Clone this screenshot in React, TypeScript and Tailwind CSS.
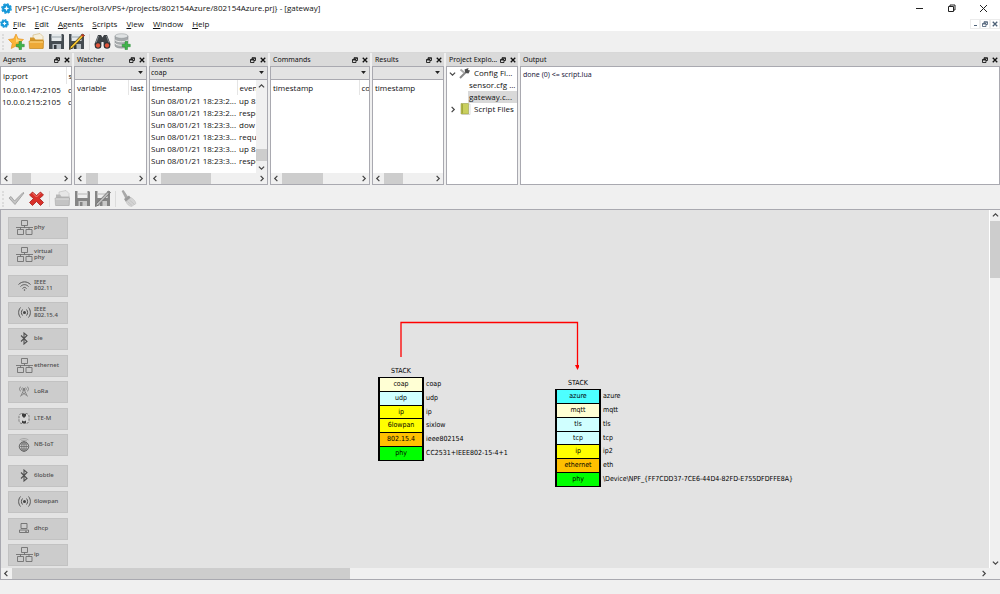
import type { ReactNode } from "react";

const windowTitle = "[VPS+] {C:/Users/jherol3/VPS+/projects/802154Azure/802154Azure.prj} - [gateway]";
const menus = ["File", "Edit", "Agents", "Scripts", "View", "Window", "Help"];

const events = [
  ["Sun 08/01/21 18:23:2...", "up 8"],
  ["Sun 08/01/21 18:23:2...", "respo"],
  ["Sun 08/01/21 18:23:3...", "dow"],
  ["Sun 08/01/21 18:23:3...", "requ"],
  ["Sun 08/01/21 18:23:3...", "up 8"],
  ["Sun 08/01/21 18:23:3...", "respo"],
];

type Layer = { name: string; label: string; color: string };

const leftStack: Layer[] = [
  { name: "coap", label: "coap", color: "bg-[#ffffd4]" },
  { name: "udp", label: "udp", color: "bg-[#d0ffff]" },
  { name: "ip", label: "ip", color: "bg-[#ffff00]" },
  { name: "6lowpan", label: "sixlow", color: "bg-[#ffff00]" },
  { name: "802.15.4", label: "ieee802154", color: "bg-[#ffc000]" },
  { name: "phy", label: "CC2531+IEEE802-15-4+1", color: "bg-[#00ff00]" },
];

const rightStack: Layer[] = [
  { name: "azure", label: "azure", color: "bg-[#4dffff]" },
  { name: "mqtt", label: "mqtt", color: "bg-[#ffffd4]" },
  { name: "tls", label: "tls", color: "bg-[#d0ffff]" },
  { name: "tcp", label: "tcp", color: "bg-[#d0ffff]" },
  { name: "ip", label: "ip2", color: "bg-[#ffff00]" },
  { name: "ethernet", label: "eth", color: "bg-[#ffc000]" },
  { name: "phy", label: "\\Device\\NPF_{FF7CDD37-7CE6-44D4-82FD-E755DFDFFE8A}", color: "bg-[#00ff00]" },
];

/* ---------- small glyphs ---------- */

function AppLogo({ className }: { className: string }) {
  return (
    <svg viewBox="0 0 20 20" className={className} aria-hidden="true">
      <circle cx="10" cy="10" r="8" fill="#1597d8" />
      <circle cx="10" cy="10" r="8.5" fill="none" stroke="#1597d8" strokeWidth="2.5" strokeDasharray="4 2.6" />
      <path d="M10 5l1.500 3.500L15 10l-3.500 1.500L10 15l-1.500-3.500L5 10l3.500-1.500z" fill="#fff" />
    </svg>
  );
}

function Chevron({ dir }: { dir: "left" | "right" | "up" | "down" }) {
  const d = {
    left: "M5 1L2 4l3 3",
    right: "M3 1l3 3-3 3",
    up: "M1 5l3-3 3 3",
    down: "M1 3l3 3 3-3",
  }[dir];
  return (
    <svg viewBox="0 0 8 8" className="size-[7px]" fill="none" stroke="#444" strokeWidth="1.4" aria-hidden="true">
      <path d={d} />
    </svg>
  );
}

function FloatGlyph() {
  return (
    <svg viewBox="0 0 12 12" className="size-[6px]" fill="none" stroke="currentColor" strokeWidth="1.7" aria-hidden="true">
      <path d="M4 4V1.500h7v5.500H8M4 2.500h7" />
      <path d="M1 5h7v6H1zM1 6h7" />
    </svg>
  );
}

function CloseGlyph() {
  return (
    <svg viewBox="0 0 12 12" className="size-[6px]" stroke="currentColor" strokeWidth="2.600" aria-hidden="true">
      <path d="M1.500 1.500l9 9M10.500 1.500l-9 9" />
    </svg>
  );
}

/* ---------- toolbar icons ---------- */

function StarIcon() {
  return (
    <svg viewBox="0 0 34 34" className="size-[17px]" aria-hidden="true">
      <path d="M16 2l4.300 9.500L31 13l-8 7.500 2 10.500-9-5-9.500 5 2-10.500L1 13l10.500-1.500z" fill="#fbb436" stroke="#e58e1a" strokeWidth="1.300" />
      <path d="M16 5l3 8 8 1-11 5z" fill="#ffd778" />
      <path d="M22 17h5v5.500h5.500v5H27V33h-5v-5.500h-5.500v-5H22z" fill="#3fb54a" stroke="#23842f" />
    </svg>
  );
}

function FolderIcon({ gray }: { gray?: boolean }) {
  return (
    <svg viewBox="0 0 34 34" className="size-[17px]" aria-hidden="true">
      <path d="M10 4l14-3 6 6v12H10z" fill={gray ? "#e6e6e6" : "#f6efdc"} stroke={gray ? "#b5b5b5" : "#c9a860"} />
      <path d="M4 9h8l3 4h16v18H4z" fill={gray ? "#b8b8b8" : "#d3962a"} />
      <path d="M2 16h29l-1 15H3z" fill={gray ? "#c4c4c4" : "#eda937"} stroke={gray ? "#a2a2a2" : "#b97f1c"} />
      <path d="M3 18h27" stroke={gray ? "#dedede" : "#ffdc8b"} strokeWidth="2" />
    </svg>
  );
}

function SaveIcon({ gray, edit }: { gray?: boolean; edit?: boolean }) {
  return (
    <svg viewBox="0 0 34 34" className="size-[17px]" aria-hidden="true">
      <path d="M2 2h28l2 2v28H2z" fill={gray ? "#858585" : "#454c52"} />
      <path d="M7 2h20v14H7z" fill={gray ? "#eeeeee" : "#e6eaec"} />
      <path d="M7 8h20" stroke={gray ? "#c8c8c8" : "#b5bcc2"} strokeWidth="3" />
      <path d="M9 22h17v10H9z" fill={gray ? "#c9c9c9" : "#b7bec4"} />
      <path d="M12 24h5v8h-5z" fill={gray ? "#858585" : "#33383d"} />
      {edit && (
        <>
          <path d="M29 2l4 3L9 30l-6 3 2-6z" fill={gray ? "#b9b9b9" : "#f0c130"} stroke={gray ? "#686868" : "#302a1c"} strokeWidth="1.500" />
          <path d="M29 2l4 3-3 3-4-3z" fill={gray ? "#888888" : "#c23a2b"} />
        </>
      )}
    </svg>
  );
}

function BinocularsIcon() {
  return (
    <svg viewBox="0 0 34 34" className="size-[17px]" aria-hidden="true">
      <path d="M8 4h6l3 5 3-5h6l7 18-2 7H20l-1-11h-4l-1 11H3l-2-7z" fill="#3c4145" />
      <path d="M9 6l-5 14M25 6l5 14" stroke="#80878c" strokeWidth="2" />
      <circle cx="8" cy="25" r="6.500" fill="#2f3235" />
      <circle cx="26" cy="25" r="6.500" fill="#2f3235" />
      <circle cx="8" cy="25" r="4.300" fill="#e2553c" />
      <circle cx="26" cy="25" r="4.300" fill="#e2553c" />
    </svg>
  );
}

function DatabaseIcon() {
  return (
    <svg viewBox="0 0 34 34" className="size-[17px]" aria-hidden="true">
      <path d="M2 6v19c0 7 26 7 26 0V6z" fill="#a7abad" stroke="#7d8284" />
      <ellipse cx="15" cy="6" rx="13" ry="4.500" fill="#dfe2e3" stroke="#8d9294" />
      <path d="M2 13c0 6 26 6 26 0M2 20c0 6 26 6 26 0" fill="none" stroke="#ececec" strokeWidth="2" />
      <path d="M22 17h5v5.500h5.500v5H27V33h-5v-5.500h-5.500v-5H22z" fill="#3fb54a" stroke="#23842f" />
    </svg>
  );
}

function CheckIcon() {
  return (
    <svg viewBox="0 0 34 34" className="size-[17px]" aria-hidden="true">
      <path d="M2 16l4-3 7 9L30 5l2 1-18 23z" fill="#c4c4c4" stroke="#969696" strokeWidth="1.500" />
    </svg>
  );
}

function CrossIcon() {
  return (
    <svg viewBox="0 0 34 34" className="size-[17px]" aria-hidden="true">
      <path d="M9 4l8 7 8-7 6 6-8 7 8 8-6 6-8-8-8 8-6-6 8-8-8-7z" fill="#d9302a" stroke="#a31511" strokeWidth="1.500" />
      <path d="M9 6l8 8 8-8" fill="none" stroke="#f58078" strokeWidth="2" />
    </svg>
  );
}

function BroomIcon() {
  return (
    <svg viewBox="0 0 34 34" className="size-[17px]" aria-hidden="true">
      <path d="M4 2l3-1 8 12-4 3z" fill="#ababab" stroke="#909090" />
      <path d="M8 18l10-7 4 5-10 8z" fill="#9a9a9a" />
      <path d="M12 23l10-8c5 3 9 7 10 12l-9 6c-5-1-9-4-11-10z" fill="#d4d4d4" stroke="#b9b9b9" />
      <path d="M15 23l9 8M19 20l10 9" stroke="#b5b5b5" />
    </svg>
  );
}

/* ---------- palette icons ---------- */

function NetworkIcon() {
  return (
    <svg viewBox="0 0 34 30" className="h-[15px] w-[17px]" fill="none" stroke="#6c6c6c" strokeWidth="1.700" aria-hidden="true">
      <path d="M11 1h12v10H11zM3 19h12v10H3zM20 19h12v10H20zM0 15h34M17 11v4M9 15v4M26 15v4" />
    </svg>
  );
}

function WifiIcon() {
  return (
    <svg viewBox="0 0 26 20" className="h-[10px] w-[13px]" fill="none" stroke="#555" strokeWidth="2" aria-hidden="true">
      <path d="M1 7c7-7 17-7 24 0M5 11c5-5 11-5 16 0M9 15c3-3 5-3 8 0" />
      <circle cx="13" cy="18" r="1.500" fill="#555" stroke="none" />
    </svg>
  );
}

function RadioIcon() {
  return (
    <svg viewBox="0 0 26 22" className="h-[11px] w-[13px]" fill="none" stroke="#555" strokeWidth="2" aria-hidden="true">
      <path d="M5 1c-5 6-5 14 0 20M9 5c-3 4-3 8 0 12M21 1c5 6 5 14 0 20M17 5c3 4 3 8 0 12" />
      <circle cx="13" cy="11" r="3" fill="#444" stroke="none" />
    </svg>
  );
}

function BluetoothIcon() {
  return (
    <svg viewBox="0 0 16 26" className="h-[13px] w-[8px]" fill="none" stroke="#505050" strokeWidth="2.200" aria-hidden="true">
      <path d="M2 7l12 12-6 5V2l6 5L2 19" />
    </svg>
  );
}

function AntennaIcon() {
  return (
    <svg viewBox="0 0 20 22" className="h-[11px] w-[10px]" fill="none" stroke="#777" strokeWidth="1.600" aria-hidden="true">
      <path d="M4 1c-4 3-4 7 0 10M7 3c-2 2-2 4 0 6M16 1c4 3 4 7 0 10M13 3c2 2 2 4 0 6M10 7L3 21M10 7l7 14M7 13l8 6M13 13l-8 6" />
      <circle cx="10" cy="6" r="1.500" fill="#555" />
    </svg>
  );
}

function LteIcon() {
  return (
    <svg viewBox="0 0 24 26" className="h-[13px] w-[12px]" aria-hidden="true">
      <rect x="2" y="3" width="20" height="20" rx="6" fill="#d6d6d6" stroke="#777" strokeWidth="2" strokeDasharray="5 2" />
      <path d="M8 4h8v4l-4 4-4-4zM8 22v-5l4 2 4-2v5z" fill="#3d3d3d" />
    </svg>
  );
}

function GlobeIcon() {
  return (
    <svg viewBox="0 0 24 28" className="h-[14px] w-[12px]" fill="none" stroke="#666" strokeWidth="1.500" aria-hidden="true">
      <path d="M3 4c6-4 12-4 18 0M6 6c4-2 8-2 12 0" stroke="#999" />
      <circle cx="12" cy="17" r="9.500" strokeWidth="2" />
      <ellipse cx="12" cy="17" rx="4.500" ry="9.500" />
      <path d="M12 7v20M3 17h18M4 12h16M4 22h16" />
    </svg>
  );
}

function ComputerIcon() {
  return (
    <svg viewBox="0 0 20 20" className="size-[10px]" fill="none" stroke="#6c6c6c" strokeWidth="1.800" aria-hidden="true">
      <path d="M4 1h12v10H4zM1 14h18v5H1zM12 16.500h4" />
    </svg>
  );
}

/* ---------- building blocks ---------- */

function ToolButton({ label, children }: { label: string; children: ReactNode }) {
  return (
    <button type="button" aria-label={label} className="flex size-[17px] shrink-0 items-center justify-center">
      {children}
    </button>
  );
}

function Toolbar({ children }: { children: ReactNode }) {
  return (
    <div role="toolbar" className="flex h-[21px] shrink-0 items-center gap-[3px] bg-[#f0f0f0] pl-[2px]">
      <span className="mr-px h-4 border-l-2 border-dotted border-[#dcdcdc]" />
      {children}
    </div>
  );
}

function Separator() {
  return <span className="mx-px h-4 w-px bg-[#dcdcdc]" />;
}

function HScroll({ thumb }: { thumb: string }) {
  return (
    <div className="flex h-[11px] shrink-0 items-stretch bg-[#f0f0f0]">
      <button type="button" aria-label="Scroll left" className="flex w-[11px] items-center justify-center">
        <Chevron dir="left" />
      </button>
      <div className="min-w-0 flex-1">
        <div className={`h-full bg-[#cdcdcd] ${thumb}`} />
      </div>
      <button type="button" aria-label="Scroll right" className="flex w-[11px] items-center justify-center">
        <Chevron dir="right" />
      </button>
    </div>
  );
}

function Dock({ title, width, children }: { title: string; width: string; children: ReactNode }) {
  return (
    <section className={`flex h-[132px] flex-col ${width}`}>
      <header className="flex h-[13px] shrink-0 items-center gap-[4px] bg-[#dadada] pr-[2px] pl-[3px]">
        <h2 className="min-w-0 flex-1 font-['Noto_Sans',sans-serif] text-[7px] leading-[12px] whitespace-nowrap">{title}</h2>
        <button type="button" aria-label={`Float ${title}`}><FloatGlyph /></button>
        <button type="button" aria-label={`Close ${title}`}><CloseGlyph /></button>
      </header>
      <div className="flex min-h-0 flex-1 flex-col border border-[#a9a9b0] bg-white">{children}</div>
    </section>
  );
}

function Filter({ label, value }: { label: string; value: string }) {
  return (
    <div className="relative shrink-0 border-b border-[#a9a9b0] bg-[#e3e3e3]">
      <select aria-label={label} className="block h-[12px] w-full appearance-none px-px font-['Noto_Sans',sans-serif] text-[7px] leading-[12px]">
        <option>{value}</option>
      </select>
      <svg viewBox="0 0 8 5" className="pointer-events-none absolute top-[4px] right-[3px] h-[3px] w-[5px]" aria-hidden="true">
        <path d="M0 0h8L4 5z" fill="#222" />
      </svg>
    </div>
  );
}

function Grid({ cols, firstWidth, rows, tall }: { cols: string[]; firstWidth: string; rows: string[][]; tall?: boolean }) {
  return (
    <div className="min-h-0 flex-1 overflow-hidden">
      <table className="w-full table-fixed border-collapse text-[8px] leading-[12px] whitespace-nowrap">
        <thead>
          <tr className={tall ? "h-[17px]" : "h-[15px]"}>
            {cols.map((c, i) => (
              <th key={c} scope="col" className={i === 0 ? `overflow-hidden p-0 pl-[2px] text-left font-normal ${firstWidth}` : "overflow-hidden border-l border-[#e5e5e5] p-0 pl-[2px] text-left font-normal"}>
                {c}
              </th>
            ))}
          </tr>
        </thead>
        <tbody>
          {rows.map((row, r) => (
            <tr key={r} className="h-[12px]">
              {row.map((cell, i) => (
                <td key={i} className={i === 0 ? "overflow-hidden p-0 pl-px" : "overflow-hidden p-0 pl-[2px]"}>{cell}</td>
              ))}
            </tr>
          ))}
        </tbody>
      </table>
    </div>
  );
}

function PaletteButton({ icon, children }: { icon: ReactNode; children: ReactNode }) {
  return (
    <button type="button" className="flex h-[22px] w-[60px] items-center border border-[#c2c2c2] bg-[#cccccc] pb-px pl-[6px] text-left font-['Noto_Sans',sans-serif] text-[6px] leading-[6px] font-medium text-[#4c4c4c]">
      <span className="flex w-[18px] shrink-0 justify-center">{icon}</span>
      <span className="pb-px pl-px">{children}</span>
    </button>
  );
}

function Stack({ layers, place, height }: { layers: Layer[]; place: string; height: string }) {
  return (
    <div className={`absolute w-[46px] font-['DejaVu_Sans_Condensed','DejaVu_Sans',sans-serif] text-[7px] leading-[12px] whitespace-nowrap text-black ${place}`}>
      <h3 className="text-center">STACK</h3>
      <ul className={`flex flex-col border-t border-black ${height}`}>
        {layers.map((l) => (
          <li key={l.name} className="flex flex-1 items-stretch">
            <span className={`w-[46px] shrink-0 border-x-2 border-b border-black text-center ${l.color}`}>{l.name}</span>
            <span className="pl-[2px]">{l.label}</span>
          </li>
        ))}
      </ul>
    </div>
  );
}

export default function App() {
  return (
    <div className="flex min-h-screen flex-col overflow-hidden bg-[#f0f0f0] font-['Open_Sans','Noto_Sans',sans-serif] text-[8px] leading-[12px] text-[#111]">
      <header className="flex h-4 items-center bg-white pl-px">
        <AppLogo className="size-[11px]" />
        <h1 className="flex-1 pl-[3px]">{windowTitle}</h1>
        <div className="flex items-center gap-[23px] pr-[12px] text-[#222]">
          <button type="button" aria-label="Minimize">
            <svg viewBox="0 0 9 9" className="size-[9px]" stroke="currentColor"><path d="M1 4.500h7" /></svg>
          </button>
          <button type="button" aria-label="Restore">
            <svg viewBox="0 0 9 9" className="size-[9px]" fill="none" stroke="currentColor"><path d="M1.500 2.500h5v5h-5zM3 2V1h5v5H7" /></svg>
          </button>
          <button type="button" aria-label="Close">
            <svg viewBox="0 0 9 9" className="size-[9px]" stroke="currentColor"><path d="M1 1l7 7M8 1L1 8" /></svg>
          </button>
        </div>
      </header>

      <nav className="flex h-[15px] items-center bg-white" aria-label="Main menu">
        <AppLogo className="size-[9px]" />
        <div className="flex flex-1 gap-[9px] pl-[4px]">
          {menus.map((m) => (
            <button key={m} type="button"><u>{m[0]}</u>{m.slice(1)}</button>
          ))}
        </div>
        <div className="flex text-[#4d6076]">
          <button type="button" aria-label="Minimize document" className="flex size-[10px] items-end justify-center border border-[#ececec] pb-[2px]">
            <span className="h-px w-[3px] bg-current" />
          </button>
          <button type="button" aria-label="Restore document" className="flex size-[10px] items-center justify-center border border-[#ececec]"><FloatGlyph /></button>
          <button type="button" aria-label="Close document" className="flex size-[10px] items-center justify-center border border-[#ececec]"><CloseGlyph /></button>
        </div>
      </nav>

      <Toolbar>
        <ToolButton label="New project"><StarIcon /></ToolButton>
        <ToolButton label="Open project"><FolderIcon /></ToolButton>
        <ToolButton label="Save project"><SaveIcon /></ToolButton>
        <ToolButton label="Save project as"><SaveIcon edit /></ToolButton>
        <Separator />
        <ToolButton label="Find"><BinocularsIcon /></ToolButton>
        <ToolButton label="Add database"><DatabaseIcon /></ToolButton>
      </Toolbar>

      <div className="flex gap-[2px] border-t border-[#d8d8d8] pb-[3px]">
        <Dock title="Agents" width="w-[72px]">
          <Grid cols={["ip:port", "s"]} firstWidth="w-[65px]" rows={[["10.0.0.147:2105", "c"], ["10.0.0.215:2105", "c"]]} tall />
          <HScroll thumb="w-[19px]" />
        </Dock>
        <Dock title="Watcher" width="w-[73px]">
          <Filter label="Watcher filter" value="" />
          <Grid cols={["variable", "last"]} firstWidth="w-[53px]" rows={[]} />
          <HScroll thumb="w-[12px]" />
        </Dock>
        <Dock title="Events" width="w-[119px]">
          <Filter label="Events filter" value="coap" />
          <div className="flex min-h-0 flex-1">
            <div className="flex min-w-0 flex-1 flex-col">
              <Grid cols={["timestamp", "even"]} firstWidth="w-[87px]" rows={events} />
            </div>
            <div className="flex w-[11px] flex-col items-center bg-[#f0f0f0]">
              <button type="button" aria-label="Scroll up" className="flex h-[12px] items-center"><Chevron dir="up" /></button>
              <span className="min-h-0 flex-1" />
              <span className="h-[12px] w-full bg-[#cdcdcd]" />
              <button type="button" aria-label="Scroll down" className="flex h-[12px] items-center"><Chevron dir="down" /></button>
            </div>
          </div>
          <HScroll thumb="w-[50px]" />
        </Dock>
        <Dock title="Commands" width="w-[100px]">
          <Filter label="Commands filter" value="" />
          <Grid cols={["timestamp", "co"]} firstWidth="w-[88px]" rows={[]} />
          <HScroll thumb="w-[41px]" />
        </Dock>
        <Dock title="Results" width="w-[72px]">
          <Filter label="Results filter" value="" />
          <Grid cols={["timestamp"]} firstWidth="w-full" rows={[]} />
          <HScroll thumb="w-[19px]" />
        </Dock>
        <Dock title="Project Explo..." width="w-[72px]">
          <ul className="text-[8px] leading-[12px] whitespace-nowrap">
            <li>
              <div className="flex items-center gap-[3px] pl-[2px]">
                <Chevron dir="down" />
                <svg viewBox="0 0 24 24" className="size-[12px]" aria-hidden="true">
                  <path d="M2 22L15 9" stroke="#888" strokeWidth="4" />
                  <path d="M11 5l8-3-1 4 4 1-3 6-6-1z" fill="#4c4c4c" />
                  <path d="M3 5l7 6" stroke="#aaa" strokeWidth="4" />
                </svg>
                <span>Config Fi...</span>
              </div>
              <ul>
                <li className="pl-[22px]">sensor.cfg ...</li>
                <li className="ml-[21px] bg-[#d9d9d9] pl-px">gateway.c...</li>
              </ul>
            </li>
            <li className="flex items-center gap-[3px] pl-[2px]">
              <Chevron dir="right" />
              <svg viewBox="0 0 24 24" className="size-[12px]" aria-hidden="true">
                <path d="M4 1h15v21H4z" fill="#c9cf5e" stroke="#8b8f3a" />
                <path d="M5 2h3v19H5z" fill="#a3a83c" />
                <path d="M20 2h2v21H6" fill="none" stroke="#bbb" />
              </svg>
              <span>Script Files</span>
            </li>
          </ul>
        </Dock>
        <Dock title="Output" width="min-w-0 flex-1">
          <p className="p-[2px] font-['Noto_Sans',sans-serif] text-[7px] leading-[12px] text-[#1c1c3c]">done (0) &lt;= script.lua</p>
        </Dock>
      </div>

      <Toolbar>
        <ToolButton label="Apply"><CheckIcon /></ToolButton>
        <ToolButton label="Cancel"><CrossIcon /></ToolButton>
        <Separator />
        <ToolButton label="Open configuration"><FolderIcon gray /></ToolButton>
        <ToolButton label="Save configuration"><SaveIcon gray /></ToolButton>
        <ToolButton label="Save configuration as"><SaveIcon gray edit /></ToolButton>
        <Separator />
        <ToolButton label="Clear"><BroomIcon /></ToolButton>
      </Toolbar>

      <main className="flex border-t border-l border-[#a9a9b0] bg-[#e3e3e3]">
        <aside className="flex flex-col gap-[9px] pt-[7px] pb-[2px] pl-[7px]" aria-label="Protocols">
          <div className="flex flex-col gap-[5px]">
            <PaletteButton icon={<NetworkIcon />}>phy</PaletteButton>
            <PaletteButton icon={<NetworkIcon />}>virtual<br />phy</PaletteButton>
          </div>
          <div className="flex h-[181px] flex-col justify-between">
            <PaletteButton icon={<WifiIcon />}>IEEE<br />802.11</PaletteButton>
            <PaletteButton icon={<RadioIcon />}>IEEE<br />802.15.4</PaletteButton>
            <PaletteButton icon={<BluetoothIcon />}>ble</PaletteButton>
            <PaletteButton icon={<NetworkIcon />}>ethernet</PaletteButton>
            <PaletteButton icon={<AntennaIcon />}>LoRa</PaletteButton>
            <PaletteButton icon={<LteIcon />}>LTE-M</PaletteButton>
            <PaletteButton icon={<GlobeIcon />}>NB-IoT</PaletteButton>
          </div>
          <div className="flex h-[101px] flex-col justify-between">
            <PaletteButton icon={<BluetoothIcon />}>6lobtle</PaletteButton>
            <PaletteButton icon={<RadioIcon />}>6lowpan</PaletteButton>
            <PaletteButton icon={<ComputerIcon />}>dhcp</PaletteButton>
            <PaletteButton icon={<NetworkIcon />}>ip</PaletteButton>
          </div>
        </aside>

        <div className="relative min-w-0 flex-1">
          <svg viewBox="0 0 180 52" className="absolute top-[110px] left-[331px] h-[52px] w-[180px]" fill="none" stroke="#f00" aria-hidden="true">
            <path d="M2 37V2.500h176.500V46" strokeWidth="1.300" />
            <path d="M176 45h5l-2.500 5z" fill="#f00" stroke="none" />
          </svg>
          <Stack layers={leftStack} place="top-[155px] left-[310px]" height="h-[84px]" />
          <Stack layers={rightStack} place="top-[167px] left-[487px]" height="h-[98px]" />
        </div>

        <div className="flex w-[11px] flex-col items-center border-l border-white bg-[#f0f0f0]">
          <button type="button" aria-label="Scroll up" className="flex h-[11px] items-center"><Chevron dir="up" /></button>
          <span className="h-[57px] w-full bg-[#cdcdcd]" />
          <span className="flex-1" />
          <button type="button" aria-label="Scroll down" className="flex h-[12px] items-center"><Chevron dir="down" /></button>
        </div>
      </main>
      <div className="border-b border-l border-[#a9a9b0] pr-[11px]">
        <HScroll thumb="w-[35%]" />
      </div>
      <footer className="h-[13px] bg-[#f0f0f0]" />
    </div>
  );
}
